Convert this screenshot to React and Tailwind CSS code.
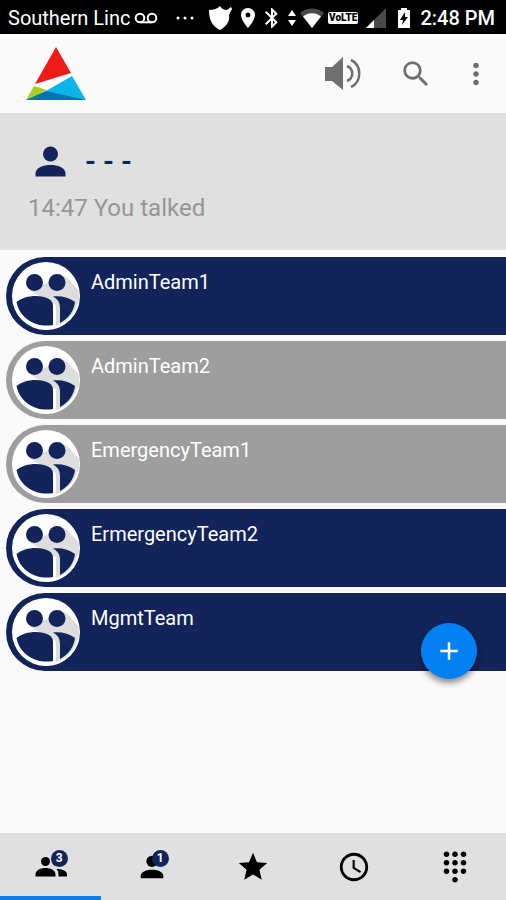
import React from 'react';
import {
  MdAccessTime,
  MdAdd,
  MdBluetooth,
  MdDialpad,
  MdLocationOn,
  MdMoreVert,
  MdSearch,
  MdStar
} from 'react-icons/md';

const PersonIcon = ({ className }) => (
  <svg className={className} viewBox="0 0 24 24" fill="currentColor">
    <circle cx="12" cy="8" r="4" />
    <path d="M4 18.500C4 15.200 8.300 13.900 12 13.900s8 1.300 8 4.600V20H4z" />
  </svg>
);

const PeopleIcon = ({ className }) => (
  <svg className={className} viewBox="0 0 34 34" fill="currentColor">
    <circle cx="11.500" cy="11.500" r="4.500" />
    <circle cx="22.500" cy="11.500" r="4.500" />
    <path d="M1.500 24.500c0-4.500 5.500-6.500 10-6.500s10 2 10 6.500v2h-20z" />
    <path d="M22.500 19c5 0 10.500 1.500 10.500 5.500v2h-8.500v-2c0-2.200-.6-4-2-5.500z" />
  </svg>
);

const groups = [
  { id: 1, name: 'AdminTeam1', online: true },
  { id: 2, name: 'AdminTeam2', online: false },
  { id: 3, name: 'EmergencyTeam1', online: false },
  { id: 4, name: 'ErmergencyTeam2', online: true },
  { id: 5, name: 'MgmtTeam', online: true }
];

const tabs = [
  { id: 'groups', label: 'Groups', icon: PeopleIcon, badge: 3, active: true },
  { id: 'contacts', label: 'Contacts', icon: PersonIcon, badge: 1 },
  { id: 'favorites', label: 'Favorites', icon: MdStar },
  { id: 'history', label: 'History', icon: MdAccessTime },
  { id: 'dialpad', label: 'Dialpad', icon: MdDialpad }
];

const StatusBar = () => (
  <div className="flex h-[34px] items-center justify-between bg-black pt-px pl-2 pr-[11px] text-xl text-white">
    <div className="flex items-center">
      <span>Southern Linc</span>
      <svg className="ml-1 h-3 w-6" viewBox="0 0 24 12" fill="none" stroke="currentColor" strokeWidth="2">
        <circle cx="6" cy="6" r="4.300" />
        <circle cx="18" cy="6" r="4.300" />
        <path d="M6 10.300h12" />
      </svg>
      <svg className="ml-4 h-1 w-6" viewBox="0 0 24 4" fill="currentColor">
        <circle cx="4" cy="2" r="1.500" />
        <circle cx="11" cy="2" r="1.500" />
        <circle cx="18" cy="2" r="1.500" />
      </svg>
    </div>
    <div className="flex items-center">
      <svg className="h-6 w-6" viewBox="0 0 24 24" fill="currentColor">
        <path d="M12 0C9 3 5 4 1 4c0 10 3 16 11 20 7-4 10-9 9-15l3-6-1-2-4 3c-3 0-5-1-7-4z" />
      </svg>
      <MdLocationOn className="ml-1 size-6" />
      <MdBluetooth className="size-6" />
      <svg className="ml-1 h-5 w-2" viewBox="0 0 8 20" fill="currentColor">
        <path d="M4 2l4 6H0zM4 18l4-6H0z" />
      </svg>
      <svg className="ml-1 h-5 w-6" viewBox="0 0 24 20">
        <path d="M0 5C7-1 17-1 24 5L12 20z" fill="#4a4a4a" />
        <path d="M3 8.500C8 4 16 4 21 8.500L12 20z" fill="#fff" />
      </svg>
      <span className="ml-1 rounded-xs bg-white px-px text-[10px] leading-3 font-black text-black">VoLTE</span>
      <svg className="ml-2 h-5 w-5" viewBox="0 0 20 20">
        <path d="M20 0v20H0z" fill="#4a4a4a" />
        <path d="M8 12v8H0z" fill="#fff" />
      </svg>
      <svg className="ml-3 h-5 w-3" viewBox="0 0 12 20">
        <path d="M3 0h6v2h3v18H0V2h3z" fill="#fff" />
        <path d="M7 4L2 12h3l-1 5 6-8H7z" fill="#000" />
      </svg>
      <span className="ml-[10px] font-medium">2:48 PM</span>
    </div>
  </div>
);

const Logo = () => (
  <svg className="h-[54px] w-[60px]" viewBox="0 0 60 54">
    <path d="M30 0l15 26L9 37z" fill="#ed1c16" />
    <path d="M46 29l14 24H0l20-9z" fill="#0db4ea" />
    <path d="M8 39l13 4L0 53z" fill="#a9cf20" />
    <path d="M0 53l20-9 40 9z" fill="#0772b5" />
    <path d="M0 53l10-5 7-2-7 7z" fill="#1c8a62" opacity="0.4" />
  </svg>
);

const Header = () => (
  <header className="flex h-[79px] items-center justify-between pl-[26px] pr-[13px] text-[#6f6f6f]">
    <Logo />
    <div className="flex items-center">
      <button type="button" aria-label="Speaker">
        <svg className="h-9 w-9" viewBox="0 0 36 36" fill="none">
          <path d="M0 11h7L18 1v33L7 25H0z" fill="currentColor" />
          <path d="M22 10c7 3 7 12 0 15" stroke="currentColor" strokeWidth="2.500" />
          <path d="M26 4c11 5 11 22 0 27" stroke="currentColor" strokeWidth="2.500" />
        </svg>
      </button>
      <button type="button" aria-label="Search" className="ml-[38px]">
        <MdSearch className="size-[34px]" />
      </button>
      <button type="button" aria-label="More" className="ml-[26px]">
        <MdMoreVert className="size-[34px]" />
      </button>
    </div>
  </header>
);

const GroupAvatar = () => (
  <svg className="h-[68px] w-[68px] shrink-0" viewBox="0 0 68 68">
    <circle cx="34" cy="34" r="34" fill="#fff" />
    <path d="M17 28l36-14 13.500 14A34 34 0 0 1 44 66.500V43L30 36z" fill="#dcdddc" />
    <path d="M66 42A33 33 0 0 1 34 66.500" fill="none" stroke="#fff" strokeWidth="2" />
    <g fill="#12245a">
      <circle cx="22.500" cy="20.500" r="8.500" />
      <circle cx="45" cy="20.500" r="8.500" />
      <path d="M4.500 40C12 33 29 32 37 37c3 2 4 4 4 7v19C24 66 8 57 4.500 40z" />
      <path d="M41 34.500c8-1 16 1 22 5.500-1 9-7 17-15 21V46c0-5-2-9-7-11.500z" />
    </g>
  </svg>
);

const GroupRow = ({ group }) => (
  <button
    type="button"
    className={`flex h-[78px] w-full rounded-l-full pl-[6px] pt-[5px] text-left text-white ${
      group.online ? 'bg-[#12245a]' : 'bg-[#9e9e9e]'
    }`}
  >
    <GroupAvatar />
    <span className="ml-[11px] mt-[6px] text-xl">{group.name}</span>
  </button>
);

const TabBar = () => (
  <nav className="grid h-[67px] grid-cols-5 bg-[#e0e0e0]">
    {tabs.map(({ id, label, icon: Icon, badge, active }) => (
      <button
        key={id}
        type="button"
        aria-label={label}
        className={`flex items-center justify-center border-b-4 pt-1 text-black ${
          active ? 'border-[#0d80ea]' : 'border-transparent'
        }`}
      >
        <span className="relative">
          <Icon className="size-[34px]" />
          {badge && (
            <span className="absolute top-0 right-0 flex size-[17px] items-center justify-center rounded-full bg-[#12245a] text-xs font-bold text-white">
              {badge}
            </span>
          )}
        </span>
      </button>
    ))}
  </nav>
);

const App = () => {
  return (
    <div className="flex min-h-screen flex-col bg-[#fafafa] font-[Roboto,sans-serif]">
      <StatusBar />
      <Header />
      <section className="h-[137px] bg-[#e0e0e0] px-[28px] pt-[26px]">
        <div className="flex items-center text-[#12245a]">
          <PersonIcon className="size-[45px]" />
          <span className="ml-3 text-[28px] leading-9 font-bold">- - -</span>
        </div>
        <p className="mt-2 text-2xl leading-8 text-[#969696]">14:47 You talked</p>
      </section>
      <main className="flex-1 pt-[7px]">
        <div className="relative flex flex-col gap-[6px] pl-[6px]">
          {groups.map((group) => (
            <GroupRow key={group.id} group={group} />
          ))}
          <button
            type="button"
            aria-label="Add group"
            className="absolute right-[29px] -bottom-2 flex size-14 items-center justify-center rounded-full bg-[#0580f2] text-white shadow-[0_4px_6px_rgba(0,0,0,0.45)]"
          >
            <MdAdd className="size-[30px]" />
          </button>
        </div>
      </main>
      <TabBar />
    </div>
  );
};

export default App;
